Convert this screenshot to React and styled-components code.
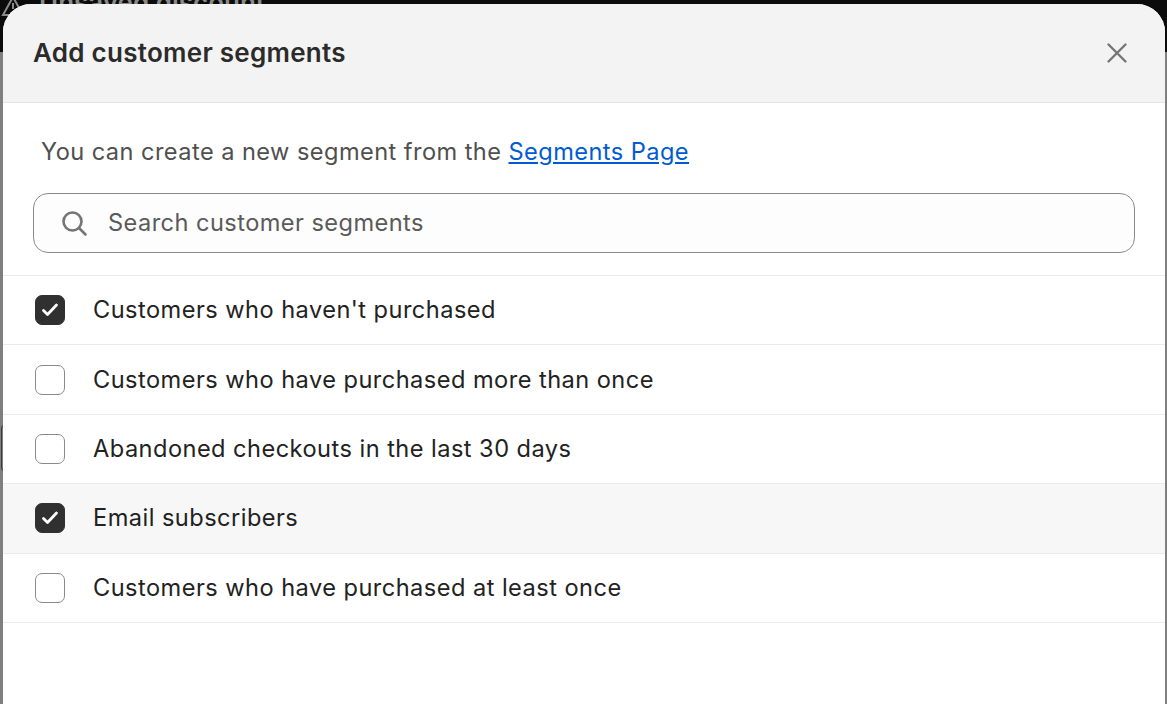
import React from "react";
import styled, { createGlobalStyle } from "styled-components";

const Global = createGlobalStyle`
  html, body { margin: 0; padding: 0; height: 100%; overflow: hidden; background: #0b0b0b; }
  #root { height: 100%; }
  * { box-sizing: border-box; }
`;
const Backdrop = styled.div`
  position: relative; width: 1167px; height: 704px; overflow: hidden;
  background: linear-gradient(#0b0b0b 0 52px, #7f7f7f 52px);
  padding: 4px 2px 0 3px; font-family: Inter, sans-serif;
`;
const Ghost = styled.div`
  position: absolute; left: 39px; top: -9px; font-size: 26px; font-weight: 600; color: #8a8a8a; line-height: 24px; white-space: nowrap;
`;
const GhostIcon = styled.svg`
  position: absolute; left: 1px; top: -6px; color: #8a8a8a;
`;
const GhostField = styled.div`
  position: absolute; left: 1px; top: 423px; width: 12px; height: 50px; border: 1px solid #3a3a3a; border-radius: 6px;
`;
const Modal = styled.div`
  position: relative; height: 740px; background: #fff; border-radius: 28px 28px 0 0; overflow: hidden;
`;
const Header = styled.header`
  height: 99px; background: #f3f3f3; border-bottom: 1px solid #e3e3e3;
  display: flex; align-items: center; justify-content: space-between; padding: 0 36px 0 30px;
`;
const Title = styled.h2`
  margin: 0; font-size: 26px; line-height: 32px; font-weight: 600; letter-spacing: 0.27px; color: #2b2b2b;
`;
const Close = styled.button`
  display: flex; padding: 0; border: 0; background: none; color: #757575;
`;
const Hint = styled.p`
  margin: 0; padding: 33px 0 0 38px; font-size: 23.6px; line-height: 32px; letter-spacing: 0.44px; color: #4f4f4f;
  a { color: #005bd3; text-decoration: underline; }
`;
const SearchBox = styled.label`
  display: flex; align-items: center; gap: 20px; height: 60px; margin: 25px 30px 22px; padding: 0 0 0 26px;
  background: #fdfdfd; border: 1px solid #8a8a8a; border-radius: 15px;
  color: #757575; font-size: 23.6px; letter-spacing: 0.44px;
`;
const SearchText = styled.span`
  color: #5a5a5a; margin-top: -1px;
`;
const Row = styled.div`
  height: 69.4px; display: flex; align-items: center; gap: 28px; padding: 0 0 0 32px;
  border-top: 1px solid #ebebeb; background: ${p => p.$hover ? "#f7f7f7" : "#fff"};
  font-size: 23.6px; letter-spacing: 0.46px; color: #222;
  &:last-child { border-bottom: 1px solid #ebebeb; height: 70px; }
`;
const RowText = styled.span`
  margin-top: -1px;
`;
const Box = styled.span`
  width: 30px; height: 30px; border-radius: 7px; display: flex; align-items: center; justify-content: center; flex: none;
  background: ${p => p.$on ? "#303030" : "#fff"};
  border: 1px solid ${p => p.$on ? "#303030" : "#8a8a8a"};
`;
const items = [
  ["Customers who haven't purchased", true, false],
  ["Customers who have purchased more than once", false, false],
  ["Abandoned checkouts in the last 30 days", false, false],
  ["Email subscribers", true, true],
  ["Customers who have purchased at least once", false, false],
];
export default function App() {
  return (
    <Backdrop>
      <Global />
      <GhostIcon width="24" height="24" viewBox="0 0 24 24" fill="none" stroke="currentColor" strokeWidth="2"><path d="M12 3L22 21H2Z" /><path d="M12 9v6M12 17v2" /></GhostIcon>
      <Ghost>Unsaved discount</Ghost>
      <GhostField />
      <Modal>
        <Header>
          <Title>Add customer segments</Title>
          <Close aria-label="Close">
            <svg width="24" height="24" viewBox="0 0 24 24" fill="none" stroke="currentColor" strokeWidth="2.4" strokeLinecap="round"><path d="M3.5 3.5l17 17M20.5 3.5l-17 17" /></svg>
          </Close>
        </Header>
        <Hint>You can create a new segment from the <a href="#">Segments Page</a></Hint>
        <SearchBox>
          <svg width="28" height="28" viewBox="0 0 28 28" fill="none" stroke="currentColor" strokeWidth="2.6" strokeLinecap="round"><circle cx="12.5" cy="12.5" r="9" /><path d="M19.5 19.5l6 6" /></svg>
          <SearchText>Search customer segments</SearchText>
        </SearchBox>
        {items.map(([t, on, h]) => (
          <Row key={t} $hover={h}>
            <Box $on={on}>
              {on && <svg width="20" height="20" viewBox="0 0 20 20" fill="none" stroke="#fff" strokeWidth="2.8" strokeLinecap="round" strokeLinejoin="round"><path d="M3.5 10.5l4 4 9-9.5" /></svg>}
            </Box>
            <RowText>{t}</RowText>
          </Row>
        ))}
      </Modal>
    </Backdrop>
  );
}
